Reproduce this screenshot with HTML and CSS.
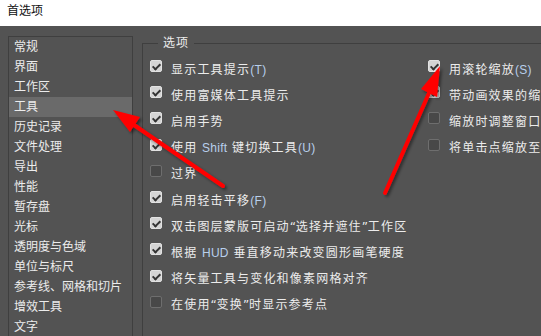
FILE: index.html
```html
<!DOCTYPE html>
<html lang="zh-CN">
<head>
    <meta charset="UTF-8">
    <meta name="viewport" content="width=device-width, initial-scale=1.0">
    <title>首选项</title>
    <link rel="stylesheet" href="styles.css">
</head>
<body>

    <div class="titlebar">首选项</div>

    <div class="main">
        <ul class="nav">
            <li>常规</li>
            <li>界面</li>
            <li>工作区</li>
            <li class="active">工具</li>
            <li>历史记录</li>
            <li>文件处理</li>
            <li>导出</li>
            <li>性能</li>
            <li>暂存盘</li>
            <li>光标</li>
            <li>透明度与色域</li>
            <li>单位与标尺</li>
            <li>参考线、网格和切片</li>
            <li>增效工具</li>
            <li>文字</li>
        </ul>

        <fieldset class="options">
            <legend>选项</legend>
            <div class="cols">
                <div class="col col-left">
                    <div class="opt"><span class="box checked"></span><span class="label">显示工具提示<span class="en">(T)</span></span></div>
                    <div class="opt"><span class="box checked"></span><span class="label">使用富媒体工具提示</span></div>
                    <div class="opt"><span class="box checked"></span><span class="label">启用手势</span></div>
                    <div class="opt"><span class="box checked"></span><span class="label">使用 <span class="en">Shift</span> 键切换工具<span class="en">(U)</span></span></div>
                    <div class="opt"><span class="box"></span><span class="label">过界</span></div>
                    <div class="opt"><span class="box checked"></span><span class="label">启用轻击平移<span class="en">(F)</span></span></div>
                    <div class="opt"><span class="box checked"></span><span class="label">双击图层蒙版可启动<span class="q">“</span>选择并遮住<span class="q">”</span>工作区</span></div>
                    <div class="opt"><span class="box checked"></span><span class="label">根据 <span class="en">HUD</span> 垂直移动来改变圆形画笔硬度</span></div>
                    <div class="opt"><span class="box checked"></span><span class="label">将矢量工具与变化和像素网格对齐</span></div>
                    <div class="opt"><span class="box"></span><span class="label">在使用<span class="q">“</span>变换<span class="q">”</span>时显示参考点</span></div>
                </div>
                <div class="col col-right">
                    <div class="opt"><span class="box checked"></span><span class="label">用滚轮缩放<span class="en">(S)</span></span></div>
                    <div class="opt"><span class="box checked"></span><span class="label">带动画效果的缩放</span></div>
                    <div class="opt"><span class="box"></span><span class="label">缩放时调整窗口大小</span></div>
                    <div class="opt"><span class="box"></span><span class="label">将单击点缩放至中心</span></div>
                </div>
            </div>
        </fieldset>
    </div>

    <!-- red annotation arrows drawn over the dialog -->
    <svg class="arrows" width="541" height="336" viewBox="0 0 541 336">
        <defs>
            <filter id="shadow" x="-20%" y="-20%" width="140%" height="140%">
                <feDropShadow dx="2" dy="2" stdDeviation="1.5" flood-color="#000" flood-opacity="0.45"/>
            </filter>
        </defs>
        <g filter="url(#shadow)" fill="#ff0000" stroke="#ff0000">
            <line x1="223" y1="186" x2="134" y2="125" stroke-width="4" stroke-linecap="round"/>
            <polygon points="113,110 140,117 130,132" stroke="none"/>
            <line x1="385" y1="193" x2="429" y2="93" stroke-width="4" stroke-linecap="round"/>
            <polygon points="440,66 437,97 421,89" stroke="none"/>
        </g>
    </svg>

</body>
</html>
```

FILE: styles.css
```css
body {
    margin: 0;
    width: 541px;
    height: 336px;
    overflow: hidden;
    position: relative;
    background-color: #535353;
    font-family: "Liberation Sans", "Noto Sans CJK SC", sans-serif;
    font-size: 12px;
    color: #ececec;
}
.titlebar {
    height: 26px;
    line-height: 22px;
    padding-left: 7px;
    background-color: #ffffff;
    color: #111;
    font-size: 12px;
}
.main {
    display: flex;
    align-items: flex-start;
    padding: 10px 0 0 8px;
}
.nav {
    list-style: none;
    margin: 0;
    padding: 0;
    width: 125px;
    height: 320px;
    box-sizing: border-box;
    border: 1px solid #3f3f3f;
    border-bottom: none;
    flex-shrink: 0;
}
.nav li {
    height: 20px;
    line-height: 20px;
    padding-left: 5px;
    white-space: nowrap;
}
.nav li.active {
    background-color: #6a6a6a;
}
.options {
    margin: 0 0 0 9px;
    padding: 5px 0 0 7px;
    min-width: 0;
    width: 430px;
    height: 300px;
    flex-shrink: 0;
    border: 1px solid #3f3f3f;
    border-right: none;
    border-bottom: none;
}
.options legend {
    margin-left: 8px;
    padding: 0 5px;
    line-height: 14px;
    letter-spacing: 1px;
}
.cols {
    display: grid;
    grid-template-columns: 278px 1fr;
}
.opt {
    display: flex;
    align-items: center;
    height: 26.2px;
    white-space: nowrap;
    letter-spacing: 1.2px;
}
.box {
    position: relative;
    width: 12px;
    height: 12px;
    box-sizing: border-box;
    margin: 0 9px 4px 0;
    border-radius: 2px;
    border: 1px solid #6e6e6e;
    background-color: #484848;
    flex-shrink: 0;
}
.box.checked {
    border-color: #e2e2e2;
    background-color: #d4d4d4;
}
.box.checked::after {
    content: "";
    position: absolute;
    left: 3px;
    top: 1px;
    width: 3px;
    height: 6px;
    border: solid #333;
    border-width: 0 2px 2px 0;
    transform: rotate(45deg);
}
.label {
    white-space: pre;
}
.q {
    display: inline-block;
    width: 6px;
    font-family: "DejaVu Sans", sans-serif;
    letter-spacing: 0;
}
.en {
    color: #b8cfec;
    letter-spacing: 0.3px;
}
.arrows {
    position: absolute;
    left: 0;
    top: 0;
    pointer-events: none;
}
```
